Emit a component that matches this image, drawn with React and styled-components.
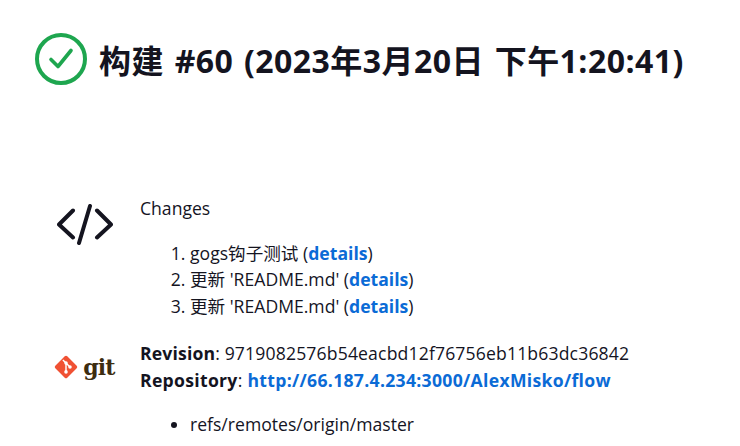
import styled, { createGlobalStyle } from "styled-components"

const Global = createGlobalStyle`
    html, body {
        margin: 0;
        padding: 0;
        background: #fff;
        overflow: hidden;
    }
    body {
        font-family: "Open Sans", "Noto Sans CJK SC", sans-serif;
        font-size: 17.6px;
        color: #14141f;
    }
`
const Page = styled.div`
    width: 740px;
    height: 446px;
    overflow: hidden;
    padding: 32px 0 0 35px;
    box-sizing: border-box;
`
const Header = styled.h1`
    display: flex;
    align-items: center;
    gap: 12px;
    margin: 0 0 109px;
    height: 54px;
    font-size: 32px;
    font-weight: 700;
    letter-spacing: 0.45px;
    word-spacing: 2px;
    white-space: nowrap;
`
const Row = styled.section`
    display: grid;
    grid-template-columns: 105px 1fr;
    margin-bottom: ${props => props.$gap || 0}px;
`
const IconCell = styled.div`
    display: flex;
    align-items: flex-start;
    justify-content: center;
    padding-top: ${props => props.$top}px;
    padding-right: 6px;
`
const Title = styled.div`
    height: 26.5px;
    line-height: 26px;
    letter-spacing: ${props => props.$spacing || 0}px;
    white-space: nowrap;
`
const Numbered = styled.ol`
    margin: 18px 0 0;
    padding: 0 0 0 50px;
    line-height: 26.5px;
`
const Bullets = styled.ul`
    margin: 18px 0 0;
    padding: 0 0 0 50px;
    line-height: 26px;
`
const Link = styled.a`
    color: #0b6bd6;
    font-weight: 700;
    text-decoration: none;
`
const GitMark = styled.div`
    display: flex;
    align-items: center;
    gap: 5px;
`
const GitWord = styled.span`
    font-family: "DejaVu Serif", serif;
    font-size: 22px;
    font-weight: 700;
    line-height: 24px;
    letter-spacing: -0.8px;
    color: #3d2d10;
`

const CheckIcon = () => (
    <svg width="52" height="52" viewBox="0 0 52 52" fill="none">
        <circle cx="26" cy="26" r="24" stroke="#1ea64f" strokeWidth="4" />
        <path d="M16 26.5 L23 33.5 L36 17.5" stroke="#1ea64f" strokeWidth="3.6" strokeLinecap="round" strokeLinejoin="round" />
    </svg>
)

const CodeIcon = () => (
    <svg width="56" height="41" viewBox="0 0 56 41" fill="none" stroke="#14141f" strokeWidth="4" strokeLinecap="round" strokeLinejoin="round">
        <path d="M16 6.5 L2 20.5 L16 33.5" />
        <path d="M40 6.5 L54 20.5 L40 33.5" />
        <path d="M33 2 L22 39" />
    </svg>
)

const GitIcon = () => (
    <svg width="24" height="24" viewBox="0 0 27 27">
        <rect x="4" y="4" width="19" height="19" rx="2" fill="#f05133" transform="rotate(45 13.5 13.5)" />
        <path d="M10 5.5 L13.5 9 V19 M13.5 9 L18 13.5" stroke="#fff" strokeWidth="1.6" fill="none" />
        <circle cx="13.5" cy="9" r="2" fill="#fff" />
        <circle cx="13.5" cy="19" r="2" fill="#fff" />
        <circle cx="18" cy="13.5" r="2" fill="#fff" />
    </svg>
)

const changes = ["gogs钩子测试", "更新 'README.md'", "更新 'README.md'"]

const App = () => {
    return (
        <Page>
            <Global />
            <Header>
                <CheckIcon />
                构建 #60 (2023年3月20日 下午1:20:41)
            </Header>
            <Row $gap={21}>
                <IconCell $top={9}><CodeIcon /></IconCell>
                <div>
                    <Title>Changes</Title>
                    <Numbered>
                        {changes.map((text, index) => (
                            <li key={index}>{text} (<Link href="#">details</Link>)</li>
                        ))}
                    </Numbered>
                </div>
            </Row>
            <Row>
                <IconCell $top={15}>
                    <GitMark><GitIcon /><GitWord>git</GitWord></GitMark>
                </IconCell>
                <div>
                    <Title $spacing={0.15}><b>Revision</b>: 9719082576b54eacbd12f76756eb11b63dc36842</Title>
                    <Title $spacing={0.3}><b>Repository</b>: <Link href="#">http://66.187.4.234:3000/AlexMisko/flow</Link></Title>
                    <Bullets>
                        <li>refs/remotes/origin/master</li>
                    </Bullets>
                </div>
            </Row>
        </Page>
    )
}

export default App
